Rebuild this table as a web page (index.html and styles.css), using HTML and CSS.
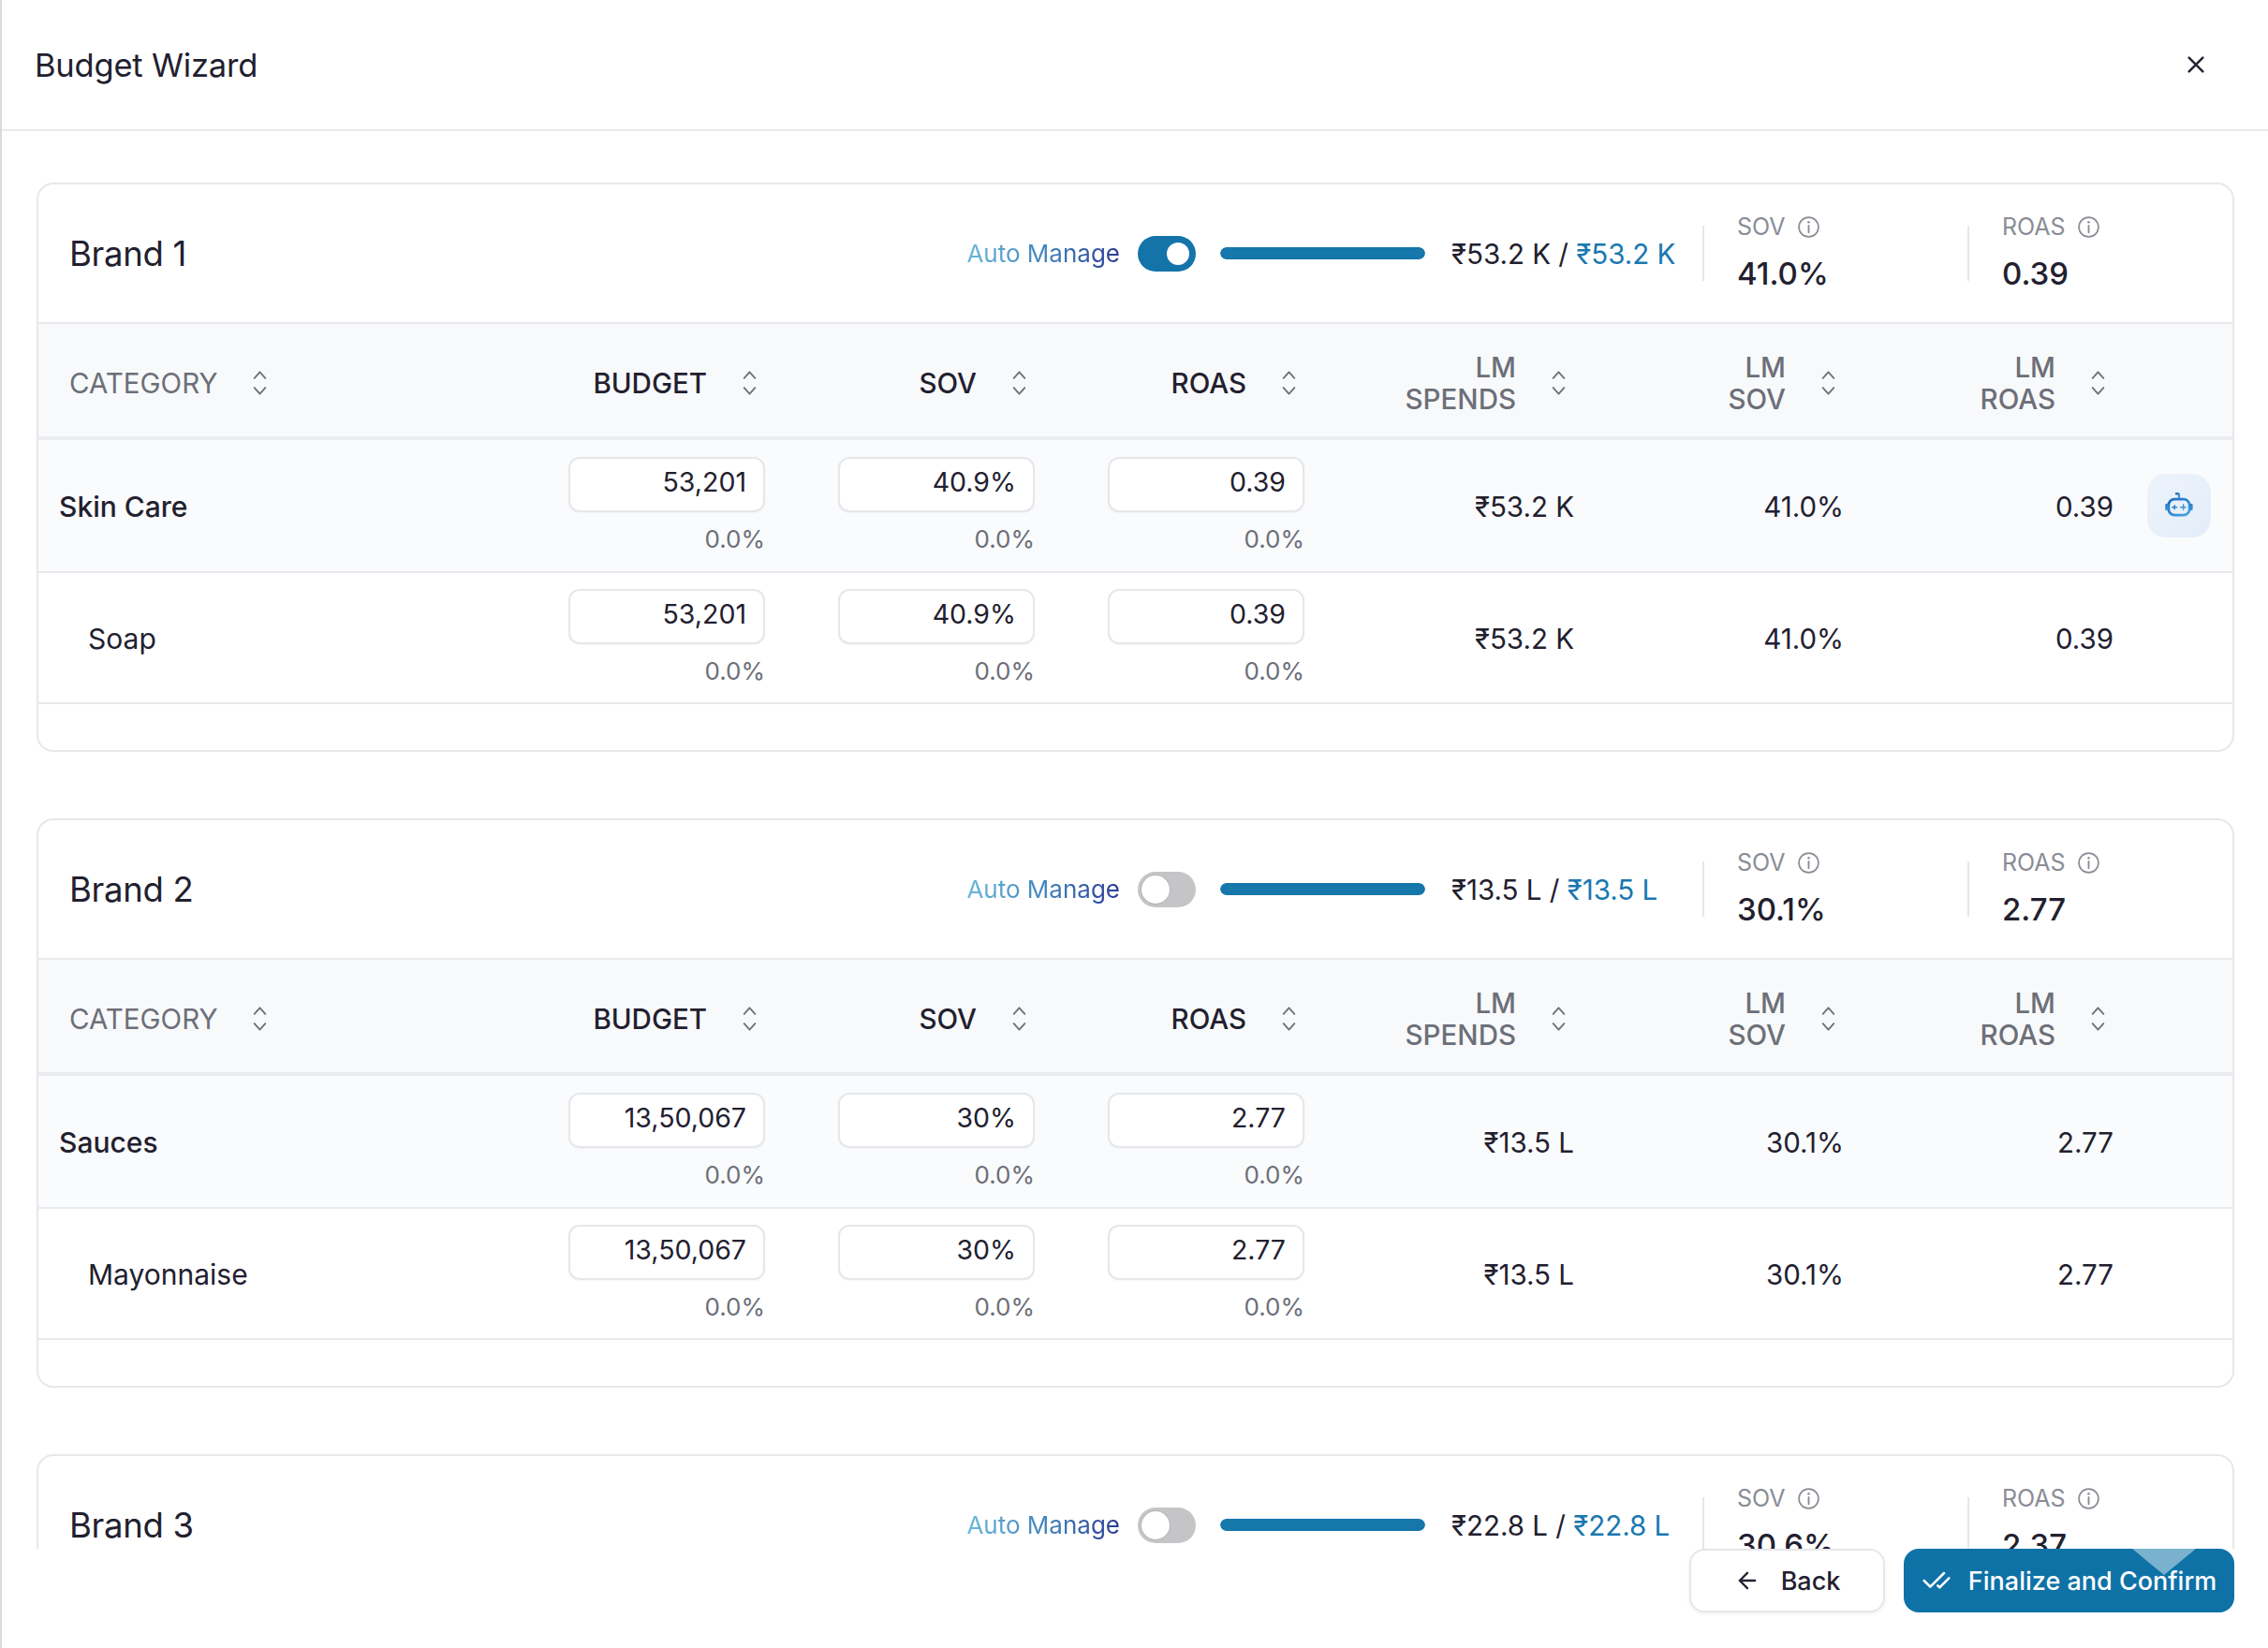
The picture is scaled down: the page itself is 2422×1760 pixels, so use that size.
FILE: index.html
```html
<!DOCTYPE html>
<html lang="en">
<head>
<meta charset="utf-8">
<title>Budget Wizard</title>
<link rel="stylesheet" href="styles.css">
</head>
<body>
<div class="modal">
  <header class="modal-header">
    <h1 class="title">Budget Wizard</h1>
    <button class="close" aria-label="Close">
      <svg viewBox="0 0 24 24" width="22" height="22"><path d="M4 4L20 20M20 4L4 20" stroke="#262433" stroke-width="2.8" stroke-linecap="round" fill="none"/></svg>
    </button>
  </header>

  <main class="modal-body">
    <!-- Brand 1 -->
    <section class="card">
      <div class="card-head">
        <h2 class="brand-name">Brand 1</h2>
        <div class="controls">
          <span class="auto-label">Auto Manage</span>
          <span class="toggle on"><span class="knob"></span></span>
          <span class="progress"><span class="progress-fill" style="width:100%"></span></span>
          <span class="amount">₹53.2 K / <span class="amount-total">₹53.2 K</span></span>
        </div>
        <span class="divider"></span>
        <div class="stat">
          <div class="stat-label">SOV <svg class="info" viewBox="0 0 24 24"><circle cx="12" cy="12" r="10" fill="none" stroke="#8a8d96" stroke-width="1.6"/><path d="M12 10.5v7" stroke="#8a8d96" stroke-width="1.8" stroke-linecap="round"/><circle cx="12" cy="7" r="1.2" fill="#8a8d96"/></svg></div>
          <div class="stat-value">41.0%</div>
        </div>
        <span class="divider"></span>
        <div class="stat">
          <div class="stat-label">ROAS <svg class="info" viewBox="0 0 24 24"><circle cx="12" cy="12" r="10" fill="none" stroke="#8a8d96" stroke-width="1.6"/><path d="M12 10.5v7" stroke="#8a8d96" stroke-width="1.8" stroke-linecap="round"/><circle cx="12" cy="7" r="1.2" fill="#8a8d96"/></svg></div>
          <div class="stat-value">0.39</div>
        </div>
      </div>

      <div class="table">
        <div class="trow thead">
          <div class="th th-cat muted">CATEGORY<svg class="sort" viewBox="0 0 12 22"><path d="M2 7.5L6 3L10 7.5M2 14.5L6 19L10 14.5" fill="none" stroke="#70737d" stroke-width="1.3" stroke-linecap="round" stroke-linejoin="round"/></svg></div>
          <div class="th">BUDGET<svg class="sort" viewBox="0 0 12 22"><path d="M2 7.5L6 3L10 7.5M2 14.5L6 19L10 14.5" fill="none" stroke="#70737d" stroke-width="1.3" stroke-linecap="round" stroke-linejoin="round"/></svg></div>
          <div class="th">SOV<svg class="sort" viewBox="0 0 12 22"><path d="M2 7.5L6 3L10 7.5M2 14.5L6 19L10 14.5" fill="none" stroke="#70737d" stroke-width="1.3" stroke-linecap="round" stroke-linejoin="round"/></svg></div>
          <div class="th">ROAS<svg class="sort" viewBox="0 0 12 22"><path d="M2 7.5L6 3L10 7.5M2 14.5L6 19L10 14.5" fill="none" stroke="#70737d" stroke-width="1.3" stroke-linecap="round" stroke-linejoin="round"/></svg></div>
          <div class="th muted"><span class="two-line">LM<br>SPENDS</span><svg class="sort" viewBox="0 0 12 22"><path d="M2 7.5L6 3L10 7.5M2 14.5L6 19L10 14.5" fill="none" stroke="#70737d" stroke-width="1.3" stroke-linecap="round" stroke-linejoin="round"/></svg></div>
          <div class="th muted"><span class="two-line">LM<br>SOV</span><svg class="sort" viewBox="0 0 12 22"><path d="M2 7.5L6 3L10 7.5M2 14.5L6 19L10 14.5" fill="none" stroke="#70737d" stroke-width="1.3" stroke-linecap="round" stroke-linejoin="round"/></svg></div>
          <div class="th muted"><span class="two-line">LM<br>ROAS</span><svg class="sort" viewBox="0 0 12 22"><path d="M2 7.5L6 3L10 7.5M2 14.5L6 19L10 14.5" fill="none" stroke="#70737d" stroke-width="1.3" stroke-linecap="round" stroke-linejoin="round"/></svg></div>
          <div class="th-empty"></div>
        </div>

        <div class="trow row-cat">
          <div class="cat-name">Skin Care</div>
          <div class="edit"><input class="num-input" type="text" value="53,201"><span class="delta">0.0%</span></div>
          <div class="edit"><input class="num-input" type="text" value="40.9%"><span class="delta">0.0%</span></div>
          <div class="edit"><input class="num-input" type="text" value="0.39"><span class="delta">0.0%</span></div>
          <div class="val">₹53.2 K</div>
          <div class="val">41.0%</div>
          <div class="val">0.39</div>
          <div class="action">
            <button class="bot-btn" aria-label="Assistant">
              <svg viewBox="0 0 32 32" width="34" height="34">
                <defs><linearGradient id="botg" x1="0" y1="0" x2="1" y2="1"><stop offset="0" stop-color="#1a6bbd"/><stop offset="1" stop-color="#4aa6e4"/></linearGradient></defs>
                <path d="M16 9.5V5.2a1.2 1.2 0 0 0-1.2-1.2H13.2" fill="none" stroke="url(#botg)" stroke-width="2.2" stroke-linecap="round"/>
                <rect x="5.5" y="9.5" width="21" height="16" rx="6" fill="none" stroke="url(#botg)" stroke-width="2.6"/>
                <rect x="2.2" y="14" width="3" height="7" rx="1.3" fill="url(#botg)"/>
                <rect x="26.8" y="14" width="3" height="7" rx="1.3" fill="url(#botg)"/>
                <path d="M9.2 17.6h4.6M11.5 15.6v4M17.6 17.6h5M20.4 15v5.2" fill="none" stroke="url(#botg)" stroke-width="1.3" stroke-linecap="round"/>
              </svg>
            </button>
          </div>
        </div>

        <div class="trow row-sub">
          <div class="sub-name">Soap</div>
          <div class="edit"><input class="num-input" type="text" value="53,201"><span class="delta">0.0%</span></div>
          <div class="edit"><input class="num-input" type="text" value="40.9%"><span class="delta">0.0%</span></div>
          <div class="edit"><input class="num-input" type="text" value="0.39"><span class="delta">0.0%</span></div>
          <div class="val">₹53.2 K</div>
          <div class="val">41.0%</div>
          <div class="val">0.39</div>
          <div class="action"></div>
        </div>
      </div>
      <div class="card-foot"></div>
    </section>

    <!-- Brand 2 -->
    <section class="card">
      <div class="card-head">
        <h2 class="brand-name">Brand 2</h2>
        <div class="controls">
          <span class="auto-label">Auto Manage</span>
          <span class="toggle"><span class="knob"></span></span>
          <span class="progress"><span class="progress-fill" style="width:100%"></span></span>
          <span class="amount">₹13.5 L / <span class="amount-total">₹13.5 L</span></span>
        </div>
        <span class="divider"></span>
        <div class="stat">
          <div class="stat-label">SOV <svg class="info" viewBox="0 0 24 24"><circle cx="12" cy="12" r="10" fill="none" stroke="#8a8d96" stroke-width="1.6"/><path d="M12 10.5v7" stroke="#8a8d96" stroke-width="1.8" stroke-linecap="round"/><circle cx="12" cy="7" r="1.2" fill="#8a8d96"/></svg></div>
          <div class="stat-value">30.1%</div>
        </div>
        <span class="divider"></span>
        <div class="stat">
          <div class="stat-label">ROAS <svg class="info" viewBox="0 0 24 24"><circle cx="12" cy="12" r="10" fill="none" stroke="#8a8d96" stroke-width="1.6"/><path d="M12 10.5v7" stroke="#8a8d96" stroke-width="1.8" stroke-linecap="round"/><circle cx="12" cy="7" r="1.2" fill="#8a8d96"/></svg></div>
          <div class="stat-value">2.77</div>
        </div>
      </div>

      <div class="table">
        <div class="trow thead">
          <div class="th th-cat muted">CATEGORY<svg class="sort" viewBox="0 0 12 22"><path d="M2 7.5L6 3L10 7.5M2 14.5L6 19L10 14.5" fill="none" stroke="#70737d" stroke-width="1.3" stroke-linecap="round" stroke-linejoin="round"/></svg></div>
          <div class="th">BUDGET<svg class="sort" viewBox="0 0 12 22"><path d="M2 7.5L6 3L10 7.5M2 14.5L6 19L10 14.5" fill="none" stroke="#70737d" stroke-width="1.3" stroke-linecap="round" stroke-linejoin="round"/></svg></div>
          <div class="th">SOV<svg class="sort" viewBox="0 0 12 22"><path d="M2 7.5L6 3L10 7.5M2 14.5L6 19L10 14.5" fill="none" stroke="#70737d" stroke-width="1.3" stroke-linecap="round" stroke-linejoin="round"/></svg></div>
          <div class="th">ROAS<svg class="sort" viewBox="0 0 12 22"><path d="M2 7.5L6 3L10 7.5M2 14.5L6 19L10 14.5" fill="none" stroke="#70737d" stroke-width="1.3" stroke-linecap="round" stroke-linejoin="round"/></svg></div>
          <div class="th muted"><span class="two-line">LM<br>SPENDS</span><svg class="sort" viewBox="0 0 12 22"><path d="M2 7.5L6 3L10 7.5M2 14.5L6 19L10 14.5" fill="none" stroke="#70737d" stroke-width="1.3" stroke-linecap="round" stroke-linejoin="round"/></svg></div>
          <div class="th muted"><span class="two-line">LM<br>SOV</span><svg class="sort" viewBox="0 0 12 22"><path d="M2 7.5L6 3L10 7.5M2 14.5L6 19L10 14.5" fill="none" stroke="#70737d" stroke-width="1.3" stroke-linecap="round" stroke-linejoin="round"/></svg></div>
          <div class="th muted"><span class="two-line">LM<br>ROAS</span><svg class="sort" viewBox="0 0 12 22"><path d="M2 7.5L6 3L10 7.5M2 14.5L6 19L10 14.5" fill="none" stroke="#70737d" stroke-width="1.3" stroke-linecap="round" stroke-linejoin="round"/></svg></div>
          <div class="th-empty"></div>
        </div>

        <div class="trow row-cat">
          <div class="cat-name">Sauces</div>
          <div class="edit"><input class="num-input" type="text" value="13,50,067"><span class="delta">0.0%</span></div>
          <div class="edit"><input class="num-input" type="text" value="30%"><span class="delta">0.0%</span></div>
          <div class="edit"><input class="num-input" type="text" value="2.77"><span class="delta">0.0%</span></div>
          <div class="val">₹13.5 L</div>
          <div class="val">30.1%</div>
          <div class="val">2.77</div>
          <div class="action"></div>
        </div>

        <div class="trow row-sub">
          <div class="sub-name">Mayonnaise</div>
          <div class="edit"><input class="num-input" type="text" value="13,50,067"><span class="delta">0.0%</span></div>
          <div class="edit"><input class="num-input" type="text" value="30%"><span class="delta">0.0%</span></div>
          <div class="edit"><input class="num-input" type="text" value="2.77"><span class="delta">0.0%</span></div>
          <div class="val">₹13.5 L</div>
          <div class="val">30.1%</div>
          <div class="val">2.77</div>
          <div class="action"></div>
        </div>
      </div>
      <div class="card-foot"></div>
    </section>

    <!-- Brand 3 -->
    <section class="card">
      <div class="card-head">
        <h2 class="brand-name">Brand 3</h2>
        <div class="controls">
          <span class="auto-label">Auto Manage</span>
          <span class="toggle"><span class="knob"></span></span>
          <span class="progress"><span class="progress-fill" style="width:100%"></span></span>
          <span class="amount">₹22.8 L / <span class="amount-total">₹22.8 L</span></span>
        </div>
        <span class="divider"></span>
        <div class="stat">
          <div class="stat-label">SOV <svg class="info" viewBox="0 0 24 24"><circle cx="12" cy="12" r="10" fill="none" stroke="#8a8d96" stroke-width="1.6"/><path d="M12 10.5v7" stroke="#8a8d96" stroke-width="1.8" stroke-linecap="round"/><circle cx="12" cy="7" r="1.2" fill="#8a8d96"/></svg></div>
          <div class="stat-value">30.6%</div>
        </div>
        <span class="divider"></span>
        <div class="stat">
          <div class="stat-label">ROAS <svg class="info" viewBox="0 0 24 24"><circle cx="12" cy="12" r="10" fill="none" stroke="#8a8d96" stroke-width="1.6"/><path d="M12 10.5v7" stroke="#8a8d96" stroke-width="1.8" stroke-linecap="round"/><circle cx="12" cy="7" r="1.2" fill="#8a8d96"/></svg></div>
          <div class="stat-value">2.37</div>
        </div>
      </div>
    </section>
  </main>

  <footer class="modal-footer">
    <button class="btn btn-back">
      <svg viewBox="0 0 24 24" width="28" height="28"><path d="M19 12H5M12 19l-7-7 7-7" fill="none" stroke="#262433" stroke-width="2" stroke-linecap="round" stroke-linejoin="round"/></svg>
      <span>Back</span>
    </button>
    <button class="btn btn-primary">
      <svg viewBox="0 0 24 24" width="32" height="32"><path d="M18 6L7 17l-5-5M22 10l-7.5 7.5L13 16" fill="none" stroke="#ffffff" stroke-width="1.9" stroke-linecap="round" stroke-linejoin="round"/></svg>
      <span>Finalize and Confirm</span>
    </button>
  </footer>
</div>
</body>
</html>
```

FILE: styles.css
```css
* { box-sizing: border-box; }

html, body {
  margin: 0;
  padding: 0;
  height: 100%;
}

body {
  font-family: Inter, "Noto Sans", "DejaVu Sans", sans-serif;
  color: #22202f;
  background: #ffffff;
}

.modal {
  height: 100vh;
  display: flex;
  flex-direction: column;
  border-left: 2px solid #d9dade;
  background: #ffffff;
}

/* Header */
.modal-header {
  flex: none;
  height: 140px;
  display: flex;
  align-items: center;
  justify-content: space-between;
  padding: 0 66px 0 35px;
  border-bottom: 2px solid #e9eaed;
}

.title {
  margin: 0;
  font-size: 34.5px;
  font-weight: 400;
  color: #22202f;
  letter-spacing: -0.2px;
}

.close {
  border: 0;
  background: none;
  padding: 0;
  width: 22px;
  height: 22px;
  display: flex;
}

/* Body */
.modal-body {
  flex: 1;
  overflow: hidden;
  padding: 55px 36px 0 37px;
  display: flex;
  flex-direction: column;
  gap: 71px;
}

.card {
  flex: none;
  border: 2px solid #e7e8eb;
  border-radius: 18px;
  overflow: hidden;
  background: #ffffff;
}

.card-head {
  height: 149px;
  display: flex;
  align-items: center;
  border-bottom: 2px solid #e9eaed;
  padding-left: 33px;
}

.brand-name {
  flex: 1;
  margin: 0;
  font-size: 36.5px;
  font-weight: 400;
  color: #22202f;
  letter-spacing: -0.3px;
}

.controls {
  display: flex;
  align-items: center;
  margin-right: 28px;
}

.auto-label {
  font-size: 26px;
  font-weight: 400;
  background: linear-gradient(90deg, #6ab8da 0%, #3f7fba 55%, #2a3b96 100%);
  -webkit-background-clip: text;
  background-clip: text;
  color: transparent;
  margin-right: 19px;
}

.toggle {
  position: relative;
  width: 62px;
  height: 38px;
  border-radius: 19px;
  background: #c5c5c7;
  margin-right: 26px;
  display: inline-block;
}

.toggle .knob {
  position: absolute;
  top: 4px;
  left: 4px;
  width: 30px;
  height: 30px;
  border-radius: 50%;
  background: #ffffff;
  box-shadow: 0 0 0 1px #b5b5b8;
}

.toggle.on {
  background: #1474aa;
}

.toggle.on .knob {
  left: 28px;
  box-shadow: none;
  border: 3px solid #1474aa;
  background: #ffffff;
}

.progress {
  width: 219px;
  height: 13px;
  border-radius: 7px;
  background: #e3eef5;
  overflow: hidden;
  margin-right: 28px;
  display: inline-block;
}

.progress-fill {
  display: block;
  height: 100%;
  background: #1677ab;
  border-radius: 7px;
}

.amount {
  min-width: 240px;
  font-size: 29.5px;
  color: #22202f;
  white-space: nowrap;
}

.amount-total {
  color: #1a78b0;
}

.divider {
  width: 2px;
  height: 59px;
  background: #e6e7ea;
  flex: none;
}

.stat {
  width: 281px;
  padding-left: 35px;
  display: flex;
  flex-direction: column;
}

.stat-label {
  display: flex;
  align-items: center;
  gap: 12px;
  font-size: 25px;
  line-height: 30px;
  color: #8a8d96;
}

.info {
  width: 25px;
  height: 25px;
}

.stat-value {
  margin-top: 13px;
  font-size: 33px;
  line-height: 44px;
  font-weight: 500;
  color: #22202f;
}

/* Table */
.trow {
  display: grid;
  grid-template-columns: 488px repeat(6, 288px) 1fr;
  align-items: center;
}

.thead {
  height: 124px;
  padding-top: 5px;
  background: #f8f9fa;
  border-bottom: 4px solid #ebecef;
}

.th {
  display: flex;
  align-items: center;
  justify-content: flex-end;
  font-size: 29.5px;
  font-weight: 500;
  color: #22202f;
  padding-right: 7px;
}

.th.muted {
  color: #6c6f79;
}

.th-cat {
  justify-content: flex-start;
  padding-left: 33px;
  font-weight: 400;
}

.two-line {
  text-align: right;
  line-height: 34px;
}

.sort {
  width: 19px;
  height: 32px;
  margin-left: 36px;
  flex: none;
}

.row-cat {
  height: 142px;
  background: #fafbfc;
  border-bottom: 2px solid #e9eaed;
}

.row-sub {
  height: 140px;
  background: #ffffff;
  border-bottom: 2px solid #e9eaed;
}

.cat-name {
  padding-left: 22px;
  padding-top: 2px;
  font-size: 30px;
  font-weight: 500;
  color: #22202f;
}

.sub-name {
  padding-left: 53px;
  padding-top: 2px;
  font-size: 30px;
  font-weight: 400;
  color: #22202f;
}

.edit {
  display: flex;
  flex-direction: column;
  align-items: flex-end;
}

.num-input {
  width: 210px;
  height: 59px;
  border: 2px solid #e6e7ea;
  border-radius: 12px;
  background: #ffffff;
  font-family: inherit;
  font-size: 28.5px;
  color: #22202f;
  text-align: right;
  padding: 0 18px 6px 12px;
  outline: none;
  box-shadow: 0 1px 2px rgba(16, 24, 40, 0.04);
}

.delta {
  margin-top: 12px;
  font-size: 26px;
  line-height: 34px;
  color: #6c6f79;
}

.val {
  text-align: right;
  font-size: 29.5px;
  color: #22202f;
  padding-top: 2px;
}

.action {
  display: flex;
  align-items: center;
  padding-left: 36px;
}

.bot-btn {
  width: 68px;
  height: 68px;
  border: 0;
  border-radius: 20px;
  background: linear-gradient(135deg, #eef3fb 0%, #e3edf9 100%);
  display: flex;
  align-items: center;
  justify-content: center;
  padding: 0;
}

.card-foot {
  height: 49px;
}

/* Footer */
.modal-footer {
  flex: none;
  height: 106px;
  display: flex;
  justify-content: flex-end;
  align-items: flex-start;
  gap: 20px;
  padding: 0 36px 0 0;
  background: #ffffff;
}

.btn {
  height: 68px;
  border-radius: 16px;
  display: flex;
  align-items: center;
  justify-content: center;
  gap: 18px;
  font-family: inherit;
  font-size: 27px;
  font-weight: 500;
  cursor: pointer;
}

.btn-back {
  width: 209px;
  background: #ffffff;
  border: 2px solid #e6e7ea;
  color: #22202f;
  box-shadow: 0 2px 4px rgba(16, 24, 40, 0.06);
  gap: 22px;
}

.btn-primary {
  position: relative;
  width: 353px;
  background: #0e72a6;
  border: 0;
  color: #ffffff;
  overflow: hidden;
}

.btn-primary::after {
  content: "";
  position: absolute;
  top: 0;
  right: 41px;
  width: 0;
  height: 0;
  border-left: 34px solid transparent;
  border-right: 34px solid transparent;
  border-top: 28px solid rgba(255, 255, 255, 0.45);
}
```
